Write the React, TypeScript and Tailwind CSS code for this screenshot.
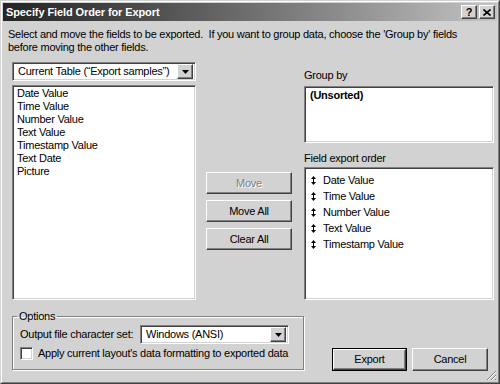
import React from "react";

const F = { fontFamily: '"Liberation Sans", Arial, sans-serif' };

const sunken =
  "border border-t-[#808080] border-l-[#808080] border-r-white border-b-white shadow-[inset_1px_1px_0_#404040,inset_-1px_-1px_0_#d2d2d2]";
const raised =
  "border border-t-white border-l-white border-r-[#404040] border-b-[#404040] shadow-[inset_-1px_-1px_0_#808080]";

function DropArrow() {
  return (
    <div className={`w-[16px] h-[15px] shrink-0 bg-[#d2d2d2] flex items-center justify-center ${raised}`}>
      <svg width="7" height="4" viewBox="0 0 7 4">
        <polygon points="0,0 7,0 3.5,4" fill="#000" />
      </svg>
    </div>
  );
}

function Btn({ children, disabled, def }: { children: React.ReactNode; disabled?: boolean; def?: boolean }) {
  const inner = (
    <div
      className={`h-full w-full bg-[#d2d2d2] flex items-center justify-center text-[11px] ${raised} ${
        disabled ? "text-[#808080] [text-shadow:1px_1px_0_#ffffff]" : "text-black"
      }`}
    >
      {children}
    </div>
  );
  if (def) return <div className="h-full w-full border border-black">{inner}</div>;
  return inner;
}

function SortIcon() {
  return (
    <svg width="5" height="9" viewBox="0 0 5 9" className="shrink-0">
      <polygon points="2.5,0 5,3 0,3" fill="#000" />
      <rect x="2" y="3" width="1" height="3" fill="#000" />
      <polygon points="0,6 5,6 2.5,9" fill="#000" />
    </svg>
  );
}

export default function App() {
  const leftItems = ["Date Value", "Time Value", "Number Value", "Text Value", "Timestamp Value", "Text Date", "Picture"];
  const orderItems = ["Date Value", "Time Value", "Number Value", "Text Value", "Timestamp Value"];
  return (
    <div style={F} className="w-[500px] h-[384px] bg-[#d2d2d2] text-black text-[11px] leading-[13px] tracking-[-0.25px] select-none whitespace-nowrap">
      <div className="w-full h-full border border-t-[#d2d2d2] border-l-[#d2d2d2] border-r-[#404040] border-b-[#404040]">
        <div className="w-full h-full border border-t-white border-l-white border-r-[#808080] border-b-[#808080] p-px flex flex-col relative">
          {/* Title bar */}
          <div className="h-[18px] shrink-0 bg-gradient-to-r from-[#242424] to-[#c4c4c4] flex items-center pl-[3px] pr-[2px]">
            <span className="text-white font-bold text-[11px] tracking-[-0.1px] flex-1">Specify Field Order for Export</span>
            <div className="flex gap-[2px]">
              <div className={`w-[16px] h-[14px] bg-[#d2d2d2] flex items-center justify-center text-[11px] font-bold leading-none ${raised}`}>?</div>
              <div className={`w-[16px] h-[14px] bg-[#d2d2d2] flex items-center justify-center ${raised}`}>
                <svg width="8" height="7" viewBox="0 0 8 7">
                  <path d="M0.5 0.5 L7.5 6.5 M7.5 0.5 L0.5 6.5" stroke="#000" strokeWidth="1.6" />
                </svg>
              </div>
            </div>
          </div>

          {/* Instructions */}
          <div className="pl-[5px] pt-[7px] pr-[6px]">
            <div>Select and move the fields to be exported.&nbsp; If you want to group data, choose the 'Group by' fields</div>
            <div>before moving the other fields.</div>
          </div>

          {/* Main area */}
          <div className="flex pl-[9px] mt-[8px]">
            {/* Left column */}
            <div className="w-[184px] flex flex-col">
              <div className={`h-[19px] bg-white flex items-center pl-[5px] pr-[2px] ${sunken}`}>
                <span className="flex-1">Current Table (“Export samples”)</span>
                <DropArrow />
              </div>
              <div className={`mt-[4px] h-[215px] bg-white pl-[4px] pt-[1px] ${sunken}`}>
                {leftItems.map((t) => (
                  <div key={t} className="h-[13px]">{t}</div>
                ))}
              </div>
            </div>

            {/* Middle buttons */}
            <div className="ml-[10px] w-[86px] pt-[110px] flex flex-col gap-[6px]">
              <div className="h-[22px]"><Btn disabled>Move</Btn></div>
              <div className="h-[22px]"><Btn>Move All</Btn></div>
              <div className="h-[22px]"><Btn>Clear All</Btn></div>
            </div>

            {/* Right column */}
            <div className="ml-[12px] w-[190px] flex flex-col">
              <div className="mt-[7px] h-[13px]">Group by</div>
              <div className={`mt-[4px] h-[57px] bg-white pl-[5px] pt-[2px] ${sunken}`}>
                <div className="font-bold">(Unsorted)</div>
              </div>
              <div className="mt-[9px] h-[13px]">Field export order</div>
              <div className={`mt-[2px] h-[133px] bg-white pl-[6px] pt-[4px] ${sunken}`}>
                {orderItems.map((t) => (
                  <div key={t} className="h-[16px] flex items-center gap-[7px]">
                    <SortIcon />
                    <span>{t}</span>
                  </div>
                ))}
              </div>
            </div>
          </div>

          {/* Bottom area */}
          <div className="flex pl-[9px] mt-[10px]">
            <fieldset className="w-[292px] min-w-0 shrink-0 border border-[#808080] shadow-[1px_1px_0_#ffffff,inset_1px_1px_0_#ffffff] px-[7px] pb-[9px] pt-[2px]">
              <legend className="px-[2px] ml-[-3px] h-[13px]">Options</legend>
              <div className="flex items-center h-[19px]">
                <span className="w-[120px]">Output file character set:</span>
                <div className={`w-[149px] h-[19px] bg-white flex items-center pl-[5px] pr-[2px] ${sunken}`}>
                  <span className="flex-1">Windows (ANSI)</span>
                  <DropArrow />
                </div>
              </div>
              <div className="flex items-center mt-[3px] h-[13px]">
                <div className={`w-[13px] h-[13px] shrink-0 bg-white ${sunken}`} />
                <span className="ml-[5px]">Apply current layout's data formatting to exported data</span>
              </div>
            </fieldset>
            <div className="ml-[28px] self-end flex gap-[5px] mb-[-1px]">
              <div className="w-[75px] h-[23px]"><Btn def>Export</Btn></div>
              <div className="w-[76px] h-[23px]"><Btn>Cancel</Btn></div>
            </div>
          </div>

          {/* Resize grip */}
          <svg width="11" height="11" viewBox="0 0 11 11" className="absolute right-[1px] bottom-[1px]">
            <path d="M10 1 L1 10 M10 5 L5 10 M10 9 L9 10" stroke="#808080" strokeWidth="1" />
            <path d="M10 2 L2 10 M10 6 L6 10" stroke="#ffffff" strokeWidth="1" />
          </svg>
        </div>
      </div>
    </div>
  );
}
